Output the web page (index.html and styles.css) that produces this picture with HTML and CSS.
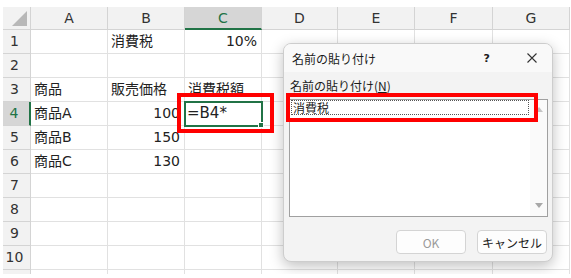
FILE: index.html
```html
<!DOCTYPE html>
<html lang="ja">
<head>
    <meta charset="UTF-8">
    <title>名前の貼り付け</title>
    <link rel="stylesheet" href="styles.css">
</head>
<body>

<div class="frame">
    <div class="sheet">
        <div class="row head">
            <div class="corner"></div>
            <div class="colhdr">A</div>
            <div class="colhdr">B</div>
            <div class="colhdr sel">C</div>
            <div class="colhdr">D</div>
            <div class="colhdr">E</div>
            <div class="colhdr">F</div>
            <div class="colhdr">G</div>
        </div>
        <div class="row">
            <div class="rowhdr">1</div>
            <div class="cell"></div>
            <div class="cell">消費税</div>
            <div class="cell num">10%</div>
            <div class="cell"></div><div class="cell"></div><div class="cell"></div><div class="cell"></div>
        </div>
        <div class="row">
            <div class="rowhdr">2</div>
            <div class="cell"></div><div class="cell"></div><div class="cell"></div>
            <div class="cell"></div><div class="cell"></div><div class="cell"></div><div class="cell"></div>
        </div>
        <div class="row">
            <div class="rowhdr">3</div>
            <div class="cell">商品</div>
            <div class="cell">販売価格</div>
            <div class="cell">消費税額</div>
            <div class="cell"></div><div class="cell"></div><div class="cell"></div><div class="cell"></div>
        </div>
        <div class="row">
            <div class="rowhdr sel">4</div>
            <div class="cell">商品A</div>
            <div class="cell num">100</div>
            <div class="cell active">=B4*</div>
            <div class="cell"></div><div class="cell"></div><div class="cell"></div><div class="cell"></div>
        </div>
        <div class="row">
            <div class="rowhdr">5</div>
            <div class="cell">商品B</div>
            <div class="cell num">150</div>
            <div class="cell"></div>
            <div class="cell"></div><div class="cell"></div><div class="cell"></div><div class="cell"></div>
        </div>
        <div class="row">
            <div class="rowhdr">6</div>
            <div class="cell">商品C</div>
            <div class="cell num">130</div>
            <div class="cell"></div>
            <div class="cell"></div><div class="cell"></div><div class="cell"></div><div class="cell"></div>
        </div>
        <div class="row">
            <div class="rowhdr">7</div>
            <div class="cell"></div><div class="cell"></div><div class="cell"></div>
            <div class="cell"></div><div class="cell"></div><div class="cell"></div><div class="cell"></div>
        </div>
        <div class="row">
            <div class="rowhdr">8</div>
            <div class="cell"></div><div class="cell"></div><div class="cell"></div>
            <div class="cell"></div><div class="cell"></div><div class="cell"></div><div class="cell"></div>
        </div>
        <div class="row">
            <div class="rowhdr">9</div>
            <div class="cell"></div><div class="cell"></div><div class="cell"></div>
            <div class="cell"></div><div class="cell"></div><div class="cell"></div><div class="cell"></div>
        </div>
        <div class="row">
            <div class="rowhdr">10</div>
            <div class="cell"></div><div class="cell"></div><div class="cell"></div>
            <div class="cell"></div><div class="cell"></div><div class="cell"></div><div class="cell"></div>
        </div>
        <div class="row">
            <div class="rowhdr">11</div>
            <div class="cell"></div><div class="cell"></div><div class="cell"></div>
            <div class="cell"></div><div class="cell"></div><div class="cell"></div><div class="cell"></div>
        </div>
    </div>

    <div class="mark mark-cell"></div>

    <div class="dialog">
        <div class="dlg-title">
            <span class="dlg-title-text">名前の貼り付け</span>
            <span class="dlg-help">?</span>
            <svg class="dlg-close" width="10" height="10" viewBox="0 0 10 10">
                <path d="M0.5 0.5 L9.5 9.5 M9.5 0.5 L0.5 9.5" stroke="#333" stroke-width="1.1" fill="none"/>
            </svg>
        </div>
        <div class="dlg-body">
            <div class="dlg-label">名前の貼り付け(<u>N</u>)</div>
            <div class="listbox">
                <div class="list-items">
                    <div class="list-item">消費税</div>
                </div>
                <div class="list-scroll">
                    <span class="arrow-up"></span>
                    <span class="arrow-down"></span>
                </div>
            </div>
            <div class="dlg-buttons">
                <button type="button" class="btn disabled">OK</button>
                <button type="button" class="btn">キャンセル</button>
            </div>
        </div>
    </div>

    <div class="mark mark-list"></div>
</div>

</body>
</html>
```

FILE: styles.css
```css
body {
    margin: 0;
    background: #fff;
    font-family: "DejaVu Sans", "Noto Sans CJK JP", sans-serif;
    color: #222;
}

.frame {
    position: relative;
    height: 274px;
    padding: 7px 0 0 3px;
    box-sizing: border-box;
    overflow: hidden;
}

/* sheet grid */
.row {
    display: grid;
    grid-template-columns: 28px 77px 77px 77px 76px 77px 78px 77px;
    height: 24px;
}
.row.head {
    height: 23px;
}
.row > div {
    box-sizing: border-box;
    border-right: 1px solid #e1e1e1;
    border-bottom: 1px solid #e1e1e1;
    font-size: 14px;
    line-height: 23px;
    white-space: nowrap;
    overflow: hidden;
}

.corner,
.colhdr,
.rowhdr {
    background: #f2f2f2;
    color: #333;
}
.row > .corner,
.row > .colhdr,
.row > .rowhdr {
    border-right-color: #d4d4d4;
    border-bottom-color: #d4d4d4;
}
.corner {
    position: relative;
}
.corner::after {
    content: "";
    position: absolute;
    right: 3px;
    bottom: 3px;
    border-left: 15px solid transparent;
    border-bottom: 15px solid #b8b8b8;
}
.colhdr {
    text-align: center;
    font-size: 13px;
}
.rowhdr {
    text-align: center;
    padding-right: 4px;
    font-size: 13px;
}
.row > .colhdr.sel {
    background: #d6d6d6;
    color: #217346;
    border-bottom: 2px solid #217346;
}
.row > .rowhdr.sel {
    background: #d6d6d6;
    color: #217346;
    border-right: 2px solid #217346;
}

.cell {
    padding: 0 3px;
}
.cell.num {
    text-align: right;
    padding-right: 4px;
}
.row > .cell.active {
    position: relative;
    overflow: visible;
    outline: 2px solid #217346;
    outline-offset: -1px;
    font-size: 15px;
    padding-left: 2px;
    z-index: 1;
}
.cell.active::after {
    content: "";
    position: absolute;
    right: -3px;
    bottom: -3px;
    width: 4px;
    height: 4px;
    background: #217346;
    border: 1px solid #fff;
}

/* red highlight boxes */
.mark {
    position: absolute;
    border: 4px solid #ff0000;
    box-sizing: border-box;
    z-index: 3;
}
.mark-cell {
    left: 177px;
    top: 93px;
    width: 97px;
    height: 40px;
}
.mark-list {
    left: 286px;
    top: 93px;
    width: 252px;
    height: 29px;
}

/* dialog */
.dialog {
    position: absolute;
    left: 283px;
    top: 43px;
    width: 270px;
    height: 219px;
    box-sizing: border-box;
    border: 1px solid #cdcdcd;
    border-radius: 8px;
    background: #f3f3f3;
    box-shadow: 0 4px 14px rgba(0, 0, 0, 0.25);
    overflow: hidden;
    display: flex;
    flex-direction: column;
    font-family: "Noto Sans CJK JP", sans-serif;
    font-size: 12px;
    color: #1b1b1b;
    z-index: 2;
}
.dlg-title {
    height: 28px;
    display: flex;
    align-items: center;
    padding-left: 8px;
    background: #f9f9f9;
}
.dlg-title-text {
    flex: 1;
}
.dlg-help {
    font-family: "DejaVu Sans", sans-serif;
    font-size: 11px;
    font-weight: bold;
    margin-right: 37px;
}
.dlg-close {
    margin-right: 15px;
}
.dlg-body {
    flex: 1;
    display: flex;
    flex-direction: column;
    padding: 0 5px 7px 5px;
}
.dlg-label {
    height: 27px;
    line-height: 27px;
    padding-left: 1px;
}
.listbox {
    width: 259px;
    height: 118px;
    box-sizing: border-box;
    border: 1px solid #a0a0a0;
    background: #fff;
    display: flex;
}
.list-items {
    flex: 1;
    padding: 0 1px;
}
.list-item {
    height: 15px;
    line-height: 13px;
    box-sizing: border-box;
    border: 1px dotted #555;
    padding-left: 1px;
}
.list-scroll {
    width: 17px;
    background: #fafafa;
    display: flex;
    flex-direction: column;
    justify-content: space-between;
    align-items: center;
    padding: 7px 0 8px;
    box-sizing: border-box;
}
.arrow-up {
    border-left: 4px solid transparent;
    border-right: 4px solid transparent;
    border-bottom: 5px solid #c4c4c4;
}
.arrow-down {
    border-left: 4px solid transparent;
    border-right: 4px solid transparent;
    border-top: 5px solid #a8a8a8;
}
.dlg-buttons {
    margin-top: 13px;
    display: flex;
    justify-content: flex-end;
    gap: 11px;
}
.btn {
    width: 70px;
    height: 24px;
    background: #fdfdfd;
    border: 1px solid #d4d4d4;
    border-radius: 4px;
    font-family: "Noto Sans CJK JP", sans-serif;
    font-size: 12px;
    color: #1b1b1b;
    padding: 0;
}
.btn.disabled {
    color: #9a9a9a;
}
```
